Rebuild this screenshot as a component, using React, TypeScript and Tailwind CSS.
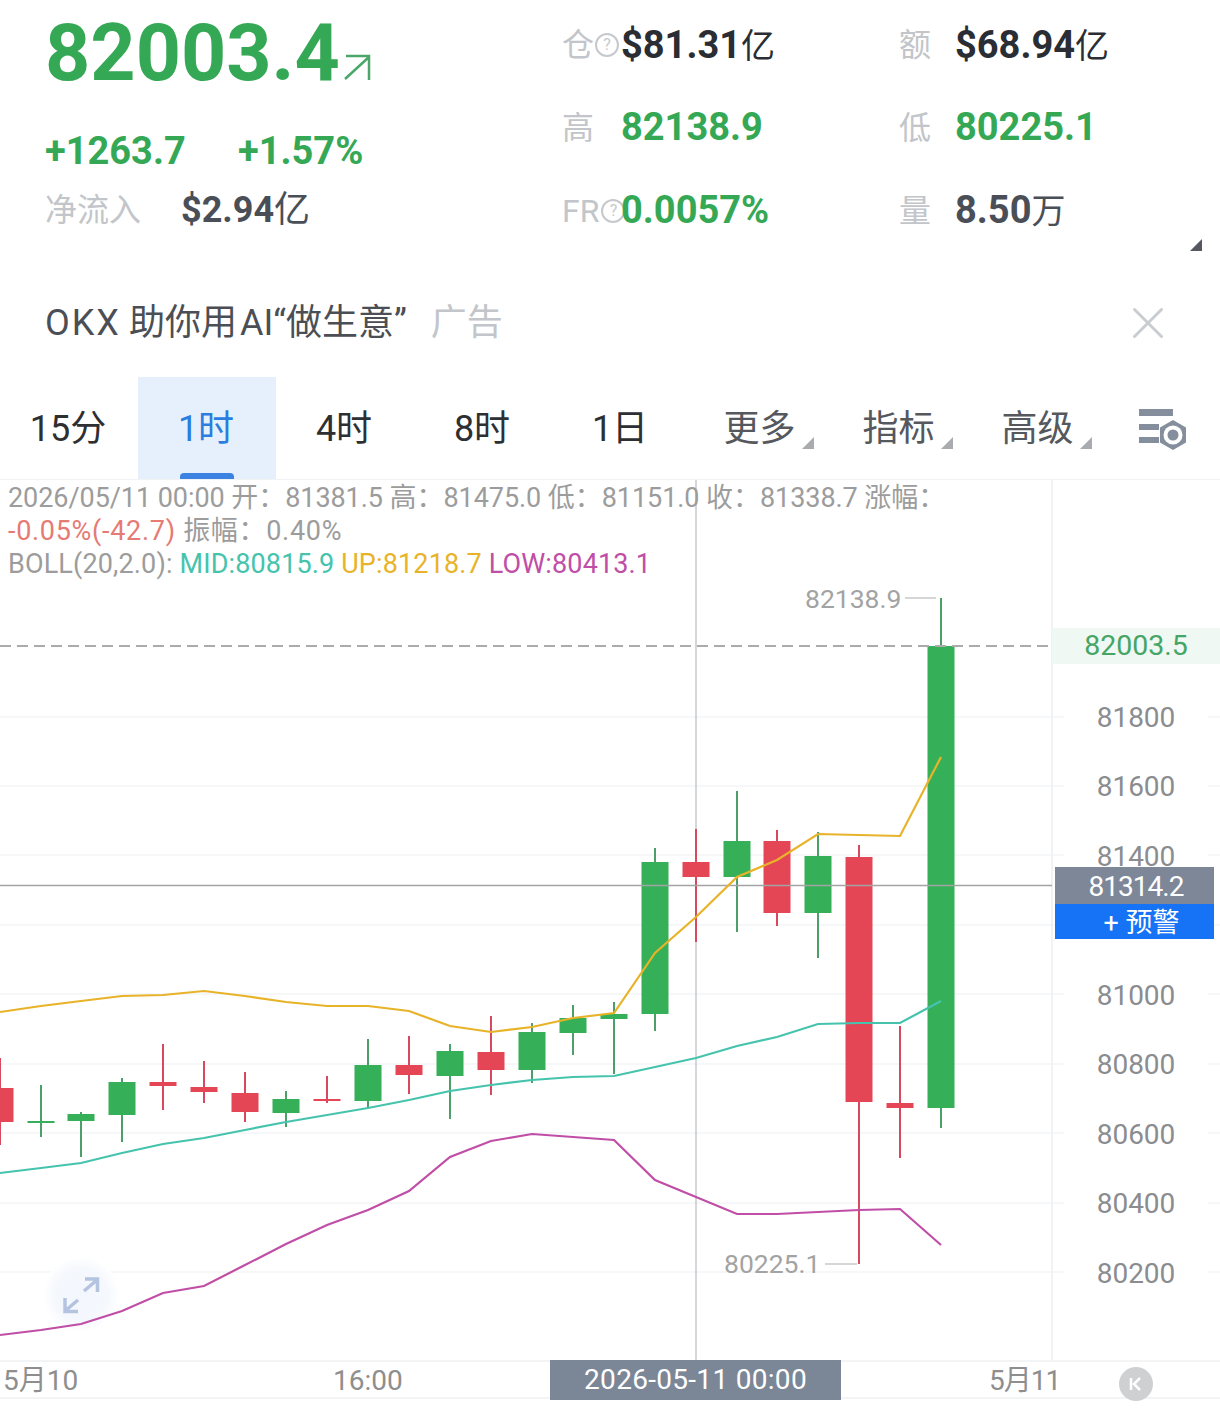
import { X } from 'lucide-react';

type Candle = [number, number, number, number, number, 'r' | 'g'];

// x, wick top, wick bottom, body top, body bottom, colour
const candles: Candle[] = [
  [0, 1058, 1145, 1088, 1122, 'r'],
  [41, 1085, 1137, 1121, 1123, 'g'],
  [81, 1112, 1157, 1114, 1121, 'g'],
  [122, 1078, 1142, 1082, 1115, 'g'],
  [163, 1044, 1110, 1082, 1086, 'r'],
  [204, 1061, 1103, 1087, 1092, 'r'],
  [245, 1072, 1122, 1093, 1112, 'r'],
  [286, 1091, 1127, 1099, 1113, 'g'],
  [327, 1076, 1103, 1099, 1101, 'r'],
  [368, 1039, 1108, 1065, 1101, 'g'],
  [409, 1036, 1094, 1065, 1075, 'r'],
  [450, 1044, 1119, 1051, 1076, 'g'],
  [491, 1016, 1095, 1052, 1070, 'r'],
  [532, 1023, 1083, 1032, 1070, 'g'],
  [573, 1005, 1055, 1018, 1033, 'g'],
  [614, 1002, 1074, 1014, 1019, 'g'],
  [655, 848, 1031, 862, 1014, 'g'],
  [696, 829, 942, 862, 877, 'r'],
  [737, 791, 932, 841, 877, 'g'],
  [777, 830, 926, 841, 913, 'r'],
  [818, 832, 958, 856, 913, 'g'],
  [859, 845, 1264, 857, 1102, 'r'],
  [900, 1026, 1158, 1103, 1108, 'r'],
  [941, 598, 1128, 646, 1108, 'g'],
];

const upLine = '0,1012 41,1006 81,1001 122,996 163,995 204,991 245,996 286,1002 327,1006 368,1006 409,1011 450,1026 491,1032 532,1027 573,1018 614,1013 655,953 696,917 737,877 777,860 818,834 859,835 900,836 941,757';
const midLine = '0,1173 41,1168 81,1163 122,1153 163,1144 204,1138 245,1130 286,1122 327,1115 368,1108 409,1100 450,1091 491,1085 532,1080 573,1077 614,1076 655,1067 696,1058 737,1046 777,1037 818,1024 859,1023 900,1023 941,1001';
const lowLine = '0,1335 41,1330 81,1324 122,1311 163,1293 204,1286 245,1265 286,1244 327,1225 368,1210 409,1191 450,1157 491,1141 532,1134 573,1137 614,1140 655,1180 696,1197 737,1214 777,1214 818,1212 859,1210 900,1209 941,1245';

const gridYs = [717, 786, 855, 925, 994, 1064, 1133, 1203, 1272];
const axisLabels: [string, number][] = [
  ['81800', 718],
  ['81600', 787],
  ['81400', 857],
  ['81000', 996],
  ['80800', 1065],
  ['80600', 1135],
  ['80400', 1204],
  ['80200', 1274],
];

const periods = ['15分', '1时', '4时', '8时', '1日'];
const menus = ['更多', '指标', '高级'];

function HelpDot({ className }: { className: string }) {
  return (
    <span className={`flex h-[24px] w-[24px] shrink-0 items-center justify-center rounded-full border-2 border-[#c6c9cc] text-[16px] leading-none text-[#c6c9cc] ${className}`}>
      ?
    </span>
  );
}

function Stat({ label, children, help }: { label: string; children: React.ReactNode; help?: string }) {
  return (
    <div className="flex items-center">
      <div className="flex w-[60px] shrink-0 items-center text-[32px] font-normal text-[#c2c5c9]">
        <span>{label}</span>
        {help && <HelpDot className={help} />}
      </div>
      {children}
    </div>
  );
}

function Chart() {
  return (
    <svg className="block" width="1220" height="880" viewBox="0 480 1220 880">
      <defs>
        <radialGradient id="expandGlow">
          <stop offset="0%" stopColor="#f3f7fd" />
          <stop offset="70%" stopColor="#f5f8fd" />
          <stop offset="100%" stopColor="#ffffff" />
        </radialGradient>
      </defs>

      {gridYs.map((y) => (
        <g key={y} stroke="#f3f4f6" strokeWidth="1.5">
          <line x1="0" x2="1064" y1={y} y2={y} />
          <line x1="1208" x2="1220" y1={y} y2={y} />
        </g>
      ))}
      <line x1="1052" x2="1052" y1="480" y2="1360" stroke="#f1f2f4" strokeWidth="2" />
      <line x1="696" x2="696" y1="480" y2="1360" stroke="#c6c8cc" strokeWidth="1.5" />

      {/* expand button */}
      <circle cx="81" cy="1295" r="38" fill="url(#expandGlow)" />
      <g fill="none" stroke="#b4c4e0" strokeWidth="3.5">
        <path d="M84 1291 L97 1280 M85 1279 H97.5 V1292" />
        <path d="M78 1300 L65 1311 M65 1298 V1311.5 H78" />
      </g>

      {candles.map(([x, hi, lo, top, bottom, c]) => (
        <g key={x}>
          <line x1={x} x2={x} y1={hi} y2={lo} stroke={c === 'r' ? '#d8485f' : '#4c9f68'} strokeWidth="2" />
          <rect x={x - 13.5} y={top} width="27" height={bottom - top} fill={c === 'r' ? '#e54656' : '#35b059'} />
        </g>
      ))}

      <line x1="0" x2="1052" y1="885.5" y2="885.5" stroke="#a3a3a3" strokeWidth="1.5" />
      <line x1="0" x2="1052" y1="646" y2="646" stroke="#ababab" strokeWidth="2" strokeDasharray="11 6" />

      <polyline points={upLine} fill="none" stroke="#e8b328" strokeWidth="2.2" />
      <polyline points={midLine} fill="none" stroke="#45c3ad" strokeWidth="2.2" />
      <polyline points={lowLine} fill="none" stroke="#c04ea6" strokeWidth="2.2" />

      <line x1="905" x2="936" y1="598" y2="598" stroke="#c9c9c9" strokeWidth="1.5" />
      <line x1="825" x2="857" y1="1264" y2="1264" stroke="#c9c9c9" strokeWidth="1.5" />
    </svg>
  );
}

export default function App() {
  return (
    <div className="relative h-[1419px] w-[1220px] overflow-hidden bg-white font-['Roboto','Noto_Sans_CJK_SC',sans-serif]">
      {/* Ticker header */}
      <div className="relative flex h-[300px]">
        <div className="w-[562px] shrink-0 pl-[45px] pt-[9px]">
          <div className="flex items-end">
            <span className="text-[79px] leading-[88px] font-bold text-[#35a855]">82003.4</span>
            <svg className="mb-[16px] ml-[2px]" width="30" height="28" viewBox="0 0 30 28" fill="none" stroke="#4ba769" strokeWidth="2.5">
              <path d="M3 26 L27 4 M4 3 H27 V27" />
            </svg>
          </div>
          <div className="mt-[31px] flex text-[38px] leading-[46px] font-bold text-[#35a855]">
            <span className="w-[193px]">+1263.7</span>
            <span>+1.57%</span>
          </div>
          <div className="mt-[13px] flex items-center">
            <span className="w-[136px] text-[32px] leading-[46px] text-[#c2c5c9]">净流入</span>
            <span className="text-[36px] leading-[46px] font-bold text-[#4a4e57]">
              $2.94<span className="font-normal">亿</span>
            </span>
          </div>
        </div>
        <div className="grid h-[252px] flex-1 grid-cols-[337px_1fr] grid-rows-3 pt-[4px] text-[38px] font-bold">
          <Stat label="仓" help="ml-[1px]">
            <span className="-ml-px text-[#2a2d33]">$81.31<span className="text-[34px] font-normal">亿</span></span>
          </Stat>
          <Stat label="额">
            <span className="-ml-[4px] text-[#2a2d33]">$68.94<span className="text-[34px] font-normal">亿</span></span>
          </Stat>
          <Stat label="高">
            <span className="-ml-px text-[#35a855]">82138.9</span>
          </Stat>
          <Stat label="低">
            <span className="-ml-[4px] text-[#35a855]">80225.1</span>
          </Stat>
          <Stat label="FR" help="ml-[2px]">
            <span className="-ml-px text-[#35a855]">0.0057%</span>
          </Stat>
          <Stat label="量">
            <span className="-ml-[4px] text-[#4a4e57]">8.50<span className="text-[34px] font-normal">万</span></span>
          </Stat>
        </div>
        <span className="absolute left-[1190px] top-[239px] h-3 w-3 bg-[#55595f] [clip-path:polygon(100%_0,100%_100%,0_100%)]" />
      </div>

      {/* Ad banner */}
      <div className="flex h-[77px] items-start justify-between pl-[45px] pr-[45px]">
        <div className="text-[36px] leading-[46px] text-[#4b4f55]">
          <span className="tracking-[2px]">OKX</span>
          <span className="ml-[8px]">助你用</span>
          <span className="ml-[3px]">AI</span>“做生意”
          <span className="ml-[24px] text-[#c2c5c9]">广告</span>
        </div>
        <X className="-mt-[4px] h-[54px] w-[54px] text-[#c9ccd0]" strokeWidth={1.3} />
      </div>

      {/* Period tabs */}
      <div className="flex h-[103px] border-b border-[#f1f2f4]">
        {periods.map((p) => (
          <div
            key={p}
            className={`relative flex w-[138px] items-center justify-center pt-[2px] pr-[2px] text-[36px] ${p === '1时' ? 'bg-[#e6f0fc] text-[#2b7de0]' : 'text-[#2d2f33]'}`}
          >
            {p}
            {p === '1时' && <span className="absolute bottom-0 left-[42px] h-[6px] w-[54px] rounded-t-[4px] bg-[#3c82e2]" />}
          </div>
        ))}
        {menus.map((m) => (
          <div key={m} className="relative flex w-[139px] items-center justify-center pt-[2px] text-[36px] text-[#55585d]">
            {m}
            <span className="absolute left-[112px] top-[60px] h-3 w-3 bg-[#a9abae] [clip-path:polygon(100%_0,100%_100%,0_100%)]" />
          </div>
        ))}
        <svg className="ml-[31px] mt-[30px]" width="50" height="44" viewBox="0 0 50 44" fill="#858e9c">
          <rect x="1" y="2" width="34" height="7" />
          <rect x="1" y="17" width="20" height="6" />
          <rect x="1" y="30" width="20" height="6" />
          <path d="M35 13 L48 20.5 V35.5 L35 43 L22 35.5 V20.5 Z" />
          <circle cx="35" cy="28" r="9.5" fill="white" />
          <circle cx="35" cy="28" r="5.5" />
        </svg>
      </div>

      {/* Candlestick chart */}
      <div className="relative h-[880px]">
        <Chart />

        <div className="absolute left-[8px] top-[2px] whitespace-nowrap text-[27px] leading-[33px] text-[#9c9c9c]">
          <div className="tracking-[-0.06px]">2026/05/11 00:00 开：81381.5 高：81475.0 低：81151.0 收：81338.7 涨幅：</div>
          <div className="tracking-[0.7px]">
            <span className="text-[#e57b74]">-0.05%(-42.7)</span> 振幅：0.40%
          </div>
          <div className="tracking-[0.14px]">
            BOLL(20,2.0): <span className="text-[#45c3ad]">MID:80815.9</span>{' '}
            <span className="text-[#e8b328]">UP:81218.7</span>{' '}
            <span className="text-[#c04ea6]">LOW:80413.1</span>
          </div>
        </div>

        <span className="absolute left-[805px] top-[102px] text-[26.5px] leading-[34px] text-[#a3a3a3]">82138.9</span>
        <span className="absolute left-[724px] top-[767px] text-[26.5px] leading-[34px] text-[#a3a3a3]">80225.1</span>

        <div className="absolute left-[1052px] top-[148px] flex h-[36px] w-[168px] items-center justify-center bg-[#eff8f2] text-[28.5px] text-[#45a566]">
          82003.5
        </div>

        {axisLabels.map(([text, y]) => (
          <span
            key={text}
            className="absolute left-[1052px] w-[168px] text-center text-[28px] leading-[34px] text-[#8a8c90]"
            style={{ top: y - 480 - 17 }}
          >
            {text}
          </span>
        ))}

        <div className="absolute left-[1055px] top-[387px] flex h-[37px] w-[159px] items-center justify-center bg-[#7d8797] pl-[3px] pt-[2px] text-[28px] tracking-[-1px] text-white">
          81314.2
        </div>
        <div className="absolute left-[1055px] top-[424px] flex h-[35px] w-[159px] items-center justify-center bg-[#1673f5] pl-[14px] pt-[3px] text-[27px] text-white">
          + 预警
        </div>
      </div>

      {/* Time axis */}
      <div className="relative h-[39px] border-y-2 border-[#f3f4f6] text-[28px] leading-[38px] text-[#8e8e8e]">
        <span className="absolute left-[3px] top-0">5月10</span>
        <span className="absolute left-[333px] top-0">16:00</span>
        <div className="absolute left-[550px] top-[-2px] flex h-[40px] w-[291px] items-center justify-center bg-[#7b8797] tracking-[0.3px] text-white">
          2026-05-11 00:00
        </div>
        <span className="absolute left-[989px] top-0 tracking-[-1px]">5月11</span>
        <div className="absolute left-[1119px] top-[5px] flex h-[34px] w-[34px] items-center justify-center rounded-full bg-[#cfd0d2]">
          <svg width="16" height="16" viewBox="0 0 16 16" fill="none" stroke="white" strokeWidth="2.5">
            <path d="M3 2 V14 M12 2 L6 8 L12 14" />
          </svg>
        </div>
      </div>
    </div>
  );
}
